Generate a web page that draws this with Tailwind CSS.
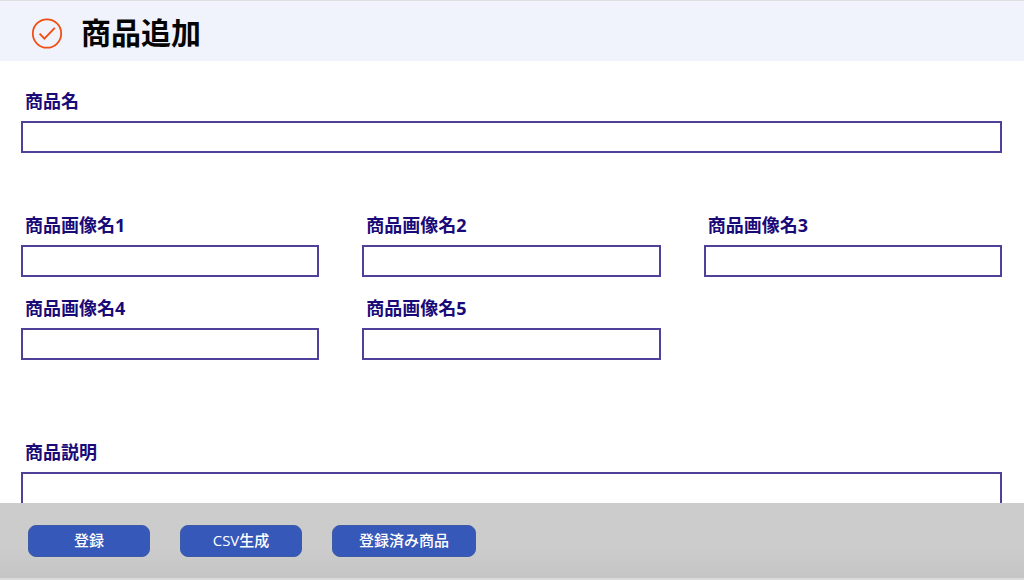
<!DOCTYPE html>
<html lang="ja">
<head>
<meta charset="utf-8">
<meta name="viewport" content="width=device-width, initial-scale=1">
<title>商品追加</title>
<script src="https://cdn.jsdelivr.net/npm/@tailwindcss/browser@4"></script>
</head>
<body class="flex h-screen flex-col overflow-hidden bg-white font-['Open_Sans','Noto_Sans_CJK_JP',sans-serif]">
<header class="flex shrink-0 items-center gap-[18px] border-t border-[#dedede] bg-[#f0f3fc] px-8 pt-2.5 pb-1.5">
  <svg class="size-[31px] shrink-0" viewBox="0 0 31 31" fill="none" stroke="#f04e12" aria-hidden="true">
    <circle cx="15" cy="15.5" r="14.2" stroke-width="1.8"/>
    <path d="M7.6 15.6 12.4 20.6 22.8 9.8" stroke-width="1.9"/>
  </svg>
  <h1 class="text-[30px] leading-[44px] font-bold text-[#050505]">商品追加</h1>
</header>
<main class="min-h-0 flex-1 overflow-hidden pt-[27px] pr-[22px] pl-[21px] text-lg leading-[27px] font-bold text-[#1a0a78]">
  <form id="product" class="flex flex-col">
    <div class="flex flex-col gap-1.5">
      <label for="name" class="pl-1">商品名</label>
      <input id="name" type="text" class="h-8 w-full border-2 border-[#50409a] bg-white px-2 outline-none">
    </div>
    <div class="mt-[59px] grid grid-cols-3 gap-x-[43px] gap-y-[18px]">
      <div class="flex flex-col gap-1.5">
        <label for="image1" class="pl-1">商品画像名1</label>
        <input id="image1" type="text" class="h-8 w-full border-2 border-[#50409a] bg-white px-2 outline-none">
      </div>
      <div class="flex flex-col gap-1.5">
        <label for="image2" class="pl-1">商品画像名2</label>
        <input id="image2" type="text" class="h-8 w-full border-2 border-[#50409a] bg-white px-2 outline-none">
      </div>
      <div class="flex flex-col gap-1.5">
        <label for="image3" class="pl-1">商品画像名3</label>
        <input id="image3" type="text" class="h-8 w-full border-2 border-[#50409a] bg-white px-2 outline-none">
      </div>
      <div class="flex flex-col gap-1.5">
        <label for="image4" class="pl-1">商品画像名4</label>
        <input id="image4" type="text" class="h-8 w-full border-2 border-[#50409a] bg-white px-2 outline-none">
      </div>
      <div class="flex flex-col gap-1.5">
        <label for="image5" class="pl-1">商品画像名5</label>
        <input id="image5" type="text" class="h-8 w-full border-2 border-[#50409a] bg-white px-2 outline-none">
      </div>
    </div>
    <div class="mt-[79px] flex flex-col gap-1.5">
      <label for="description" class="pl-1">商品説明</label>
      <textarea id="description" rows="6" class="w-full resize-none border-2 border-[#50409a] bg-white px-2 outline-none"></textarea>
    </div>
  </form>
</main>
<footer class="flex shrink-0 items-center gap-[30px] border-b-2 border-[#dadada] bg-linear-to-b from-[#cccccc] from-60% to-[#c5c5c5] px-7 pt-[22px] pb-[21px] text-[15px] leading-[22px] font-medium text-white">
  <button type="submit" form="product" class="h-8 min-w-[122px] rounded-lg border border-[#3d5ba6] bg-[#3558b9] px-[26px] pb-0.5">登録</button>
  <button type="button" class="h-8 min-w-[122px] rounded-lg border border-[#3d5ba6] bg-[#3558b9] px-[26px] pb-0.5">CSV生成</button>
  <button type="button" class="h-8 min-w-[122px] rounded-lg border border-[#3d5ba6] bg-[#3558b9] px-[26px] pb-0.5">登録済み商品</button>
</footer>
</body>
</html>
